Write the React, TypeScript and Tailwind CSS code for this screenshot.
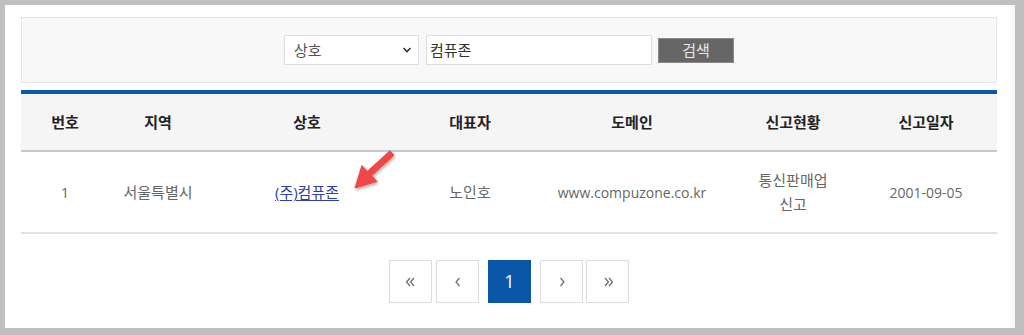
const font = { fontFamily: '"Open Sans", "Noto Sans CJK KR", sans-serif' };

const columns = ["번호", "지역", "상호", "대표자", "도메인", "신고현황", "신고일자"];

function Chevron({ dir, double }: { dir: "left" | "right"; double?: boolean }) {
  return (
    <svg width="16" height="16" viewBox="0 0 16 16" fill="none" stroke="#6a6a6a" strokeWidth="1.2">
      {double ? (
        dir === "left" ? (
          <>
            <polyline points="7,4 3.5,8 7,12" />
            <polyline points="11,4 7.5,8 11,12" />
          </>
        ) : (
          <>
            <polyline points="5,4 8.5,8 5,12" />
            <polyline points="9,4 12.5,8 9,12" />
          </>
        )
      ) : dir === "left" ? (
        <polyline points="9.5,4 6,8 9.5,12" />
      ) : (
        <polyline points="6.5,4 10,8 6.5,12" />
      )}
    </svg>
  );
}

function PageButton({ children }: { children: React.ReactNode }) {
  return (
    <button
      type="button"
      className="flex h-[43px] w-[43px] items-center justify-center border border-[#dcdcdc] bg-white"
    >
      {children}
    </button>
  );
}

export default function App() {
  return (
    <div className="h-[335px] w-[1024px] bg-[#bfbfbf] pb-[7px] pl-[5px] pr-[9px] pt-[5px]" style={font}>
      <div className="h-full w-[1010px] bg-white pl-[16px] pt-[12px] shadow-[inset_-8px_0_8px_-6px_rgba(0,0,0,0.05)]">
        <div className="w-[976px]">
          <div className="flex h-[66px] items-center justify-center border border-[#e6e6e6] bg-[#f8f8f8]">
            <div className="flex h-[30px] w-[135px] items-center justify-between border border-[#dddddd] bg-white pl-[9px] pr-[6px] text-[15px] text-[#555]">
              <span>상호</span>
              <svg width="10" height="8" viewBox="0 0 10 8" fill="none" stroke="#333" strokeWidth="1.6">
                <polyline points="1.5,2 5,5.5 8.5,2" />
              </svg>
            </div>
            <div className="ml-[7px] flex h-[30px] w-[226px] items-center border border-[#dddddd] bg-white pl-[3px] text-[15px] text-[#333]">
              컴퓨존
            </div>
            <button
              type="button"
              className="ml-[6px] flex h-[25px] w-[76px] items-center justify-center border border-[#888] bg-[#666] text-[15px] text-[#e8e8e8]"
            >
              검색
            </button>
          </div>

          <div className="mt-[7px] border-t-[4px] border-[#0a56a8]">
            <div className="grid h-[58px] grid-cols-[88px_98px_200px_126px_198px_124px_142px] items-center border-b-2 border-[#c8c8c8] bg-[#f5f5f5] text-center text-[15px] font-bold text-[#222]">
              {columns.map((col) => (
                <div key={col}>{col}</div>
              ))}
            </div>
            <div className="relative grid h-[82px] grid-cols-[88px_98px_200px_126px_198px_124px_142px] items-center border-b-2 border-[#e2e2e2] text-center text-[14px] text-[#666]">
              <div>1</div>
              <div className="text-[15px]">서울특별시</div>
              <div className="text-[15px]">
                <a href="#" className="text-[#2d3fa6] underline underline-offset-2">
                  (주)컴퓨존
                </a>
              </div>
              <div className="text-[15px]">노인호</div>
              <div>www.compuzone.co.kr</div>
              <div className="text-[15px] leading-[24px]">
                통신판매업
                <br />
                신고
              </div>
              <div>2001-09-05</div>

              {/* callout arrow drawn over the row */}
              <svg
                className="absolute left-[328px] top-[-6px]"
                width="54"
                height="52"
                viewBox="0 0 54 52"
              >
                <defs>
                  <filter id="arrow-shadow" x="-30%" y="-30%" width="160%" height="160%">
                    <feDropShadow dx="1" dy="2" stdDeviation="1.5" floodColor="#000" floodOpacity="0.3" />
                  </filter>
                </defs>
                <path
                  filter="url(#arrow-shadow)"
                  fill="#f04646"
                  stroke="#f04646"
                  strokeWidth="1"
                  strokeLinejoin="round"
                  d="M40.9 4.8 L45.1 9.2 L22.6 29.7 L28.1 35.5 L6 42 L12.9 19.5 L18.4 25.3 Z"
                />
              </svg>
            </div>
          </div>

          <div className="mt-[26px] flex items-center justify-center">
            <div className="flex gap-[4px]">
              <PageButton>
                <Chevron dir="left" double />
              </PageButton>
              <PageButton>
                <Chevron dir="left" />
              </PageButton>
            </div>
            <button
              type="button"
              className="mx-[9px] flex h-[43px] w-[43px] items-center justify-center bg-[#0a56a8] text-[18px] text-white"
            >
              1
            </button>
            <div className="flex gap-[3px]">
              <PageButton>
                <Chevron dir="right" />
              </PageButton>
              <PageButton>
                <Chevron dir="right" double />
              </PageButton>
            </div>
          </div>
        </div>
      </div>
    </div>
  );
}
